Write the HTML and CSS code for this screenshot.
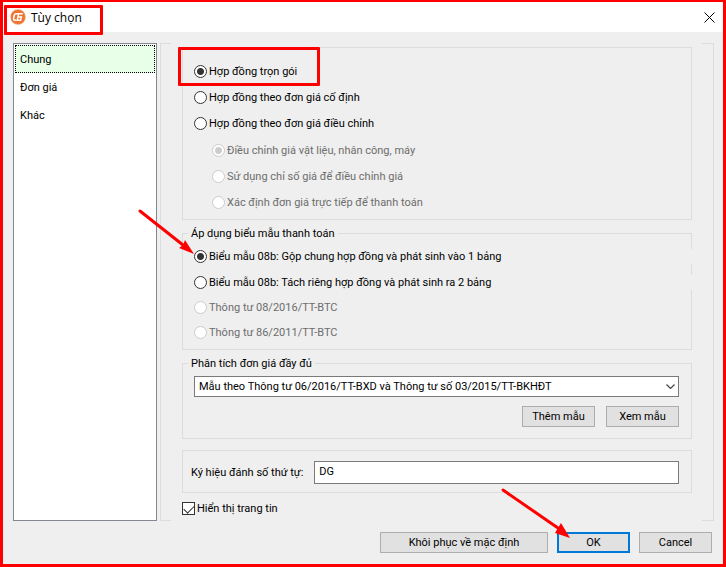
FILE: index.html
```html
<!DOCTYPE html>
<html lang="vi">
<head>
    <meta charset="UTF-8">
    <meta name="viewport" content="width=device-width, initial-scale=1.0">
    <title>Tùy chọn</title>
    <link rel="stylesheet" href="styles.css">
</head>
<body>

<div class="dialog">
    <header class="titlebar">
        <div class="title">
            <svg class="logo" width="16" height="16" viewBox="0 0 16 16">
                <circle cx="8" cy="8" r="7.7" fill="#f0a070"/>
                <circle cx="8" cy="8" r="7" fill="#ee7430"/>
                <path d="M12.8 4.8H6.2Q4.6 4.8 4.2 6.4L3.6 9.4Q3.4 11.2 5 11.2H6.4" fill="none" stroke="#fff" stroke-width="1.6"/>
                <path d="M8.6 5L7.2 11.2H10.6L11.4 8H8.2" fill="none" stroke="#fff" stroke-width="1.4"/>
            </svg>
            <h1>Tùy chọn</h1>
            <span class="mark mark-title"></span>
        </div>
        <button class="close" aria-label="Close">
            <svg width="11" height="11" viewBox="0 0 11 11">
                <path d="M0.5 0.5L10.5 10.5M10.5 0.5L0.5 10.5" stroke="#000" stroke-width="1"/>
            </svg>
        </button>
    </header>

    <main class="content">
        <nav class="sidebar">
            <a href="#" class="active">Chung</a>
            <a href="#">Đơn giá</a>
            <a href="#">Khác</a>
        </nav>

        <div class="panel">
            <!-- Contract type -->
            <fieldset class="group contract">
                <div class="row">
                    <input type="radio" name="contract" id="c1" checked>
                    <label for="c1">Hợp đồng trọn gói</label>
                    <span class="mark mark-row"></span>
                </div>
                <div class="row">
                    <input type="radio" name="contract" id="c2">
                    <label for="c2">Hợp đồng theo đơn giá cố định</label>
                </div>
                <div class="row">
                    <input type="radio" name="contract" id="c3">
                    <label for="c3">Hợp đồng theo đơn giá điều chỉnh</label>
                </div>
                <div class="sub">
                    <div class="row">
                        <input type="radio" name="adjust" id="a1" checked disabled>
                        <label for="a1">Điều chỉnh giá vật liệu, nhân công, máy</label>
                    </div>
                    <div class="row">
                        <input type="radio" name="adjust" id="a2" disabled>
                        <label for="a2">Sử dụng chỉ số giá để điều chỉnh giá</label>
                    </div>
                    <div class="row">
                        <input type="radio" name="adjust" id="a3" disabled>
                        <label for="a3">Xác định đơn giá trực tiếp để thanh toán</label>
                    </div>
                </div>
            </fieldset>

            <!-- Payment form -->
            <fieldset class="group forms">
                <legend>Áp dụng biểu mẫu thanh toán</legend>
                <div class="row wide">
                    <input type="radio" name="form" id="f1" checked>
                    <label for="f1">Biểu mẫu 08b: Gộp chung hợp đồng và phát sinh vào 1 bảng</label>
                    <svg class="arrow arrow-form" width="58" height="48" viewBox="0 0 58 48">
                        <path d="M3 2L46 36" stroke="#f00" stroke-width="3" stroke-linecap="round"/>
                        <path d="M57 45L42 39L46 36L48 31Z" fill="#f00"/>
                    </svg>
                </div>
                <div class="row wide">
                    <input type="radio" name="form" id="f2">
                    <label for="f2">Biểu mẫu 08b: Tách riêng hợp đồng và phát sinh ra 2 bảng</label>
                </div>
                <div class="row short">
                    <input type="radio" name="form" id="f3" disabled>
                    <label for="f3">Thông tư 08/2016/TT-BTC</label>
                </div>
                <div class="row short">
                    <input type="radio" name="form" id="f4" disabled>
                    <label for="f4">Thông tư 86/2011/TT-BTC</label>
                </div>
            </fieldset>

            <!-- Unit price template -->
            <fieldset class="group template">
                <legend>Phân tích đơn giá đầy đủ</legend>
                <div class="select-box">
                    <select aria-label="Phân tích đơn giá đầy đủ">
                        <option>Mẫu theo Thông tư 06/2016/TT-BXD và Thông tư số 03/2015/TT-BKHĐT</option>
                    </select>
                    <svg class="chevron" width="9" height="6" viewBox="0 0 9 6">
                        <path d="M0.5 0.5L4.5 4.5L8.5 0.5" fill="none" stroke="#444" stroke-width="1.2"/>
                    </svg>
                </div>
                <div class="template-buttons">
                    <button class="btn">Thêm mẫu</button>
                    <button class="btn">Xem mẫu</button>
                </div>
            </fieldset>

            <div class="group numbering">
                <label for="prefix">Ký hiệu đánh số thứ tự:</label>
                <input type="text" id="prefix" value="DG">
            </div>

            <div class="news">
                <input type="checkbox" id="news" checked>
                <label for="news">Hiển thị trang tin</label>
            </div>
        </div>
    </main>

    <footer class="footer">
        <button class="btn btn-wide">Khôi phục về mặc định</button>
        <div class="ok">
            <button class="btn btn-default">OK</button>
            <svg class="arrow arrow-ok" width="72" height="52" viewBox="0 0 72 52">
                <path d="M3 2L58 40" stroke="#f00" stroke-width="3" stroke-linecap="round"/>
                <path d="M70 50L55 45L58 40L61 35Z" fill="#f00"/>
            </svg>
        </div>
        <button class="btn">Cancel</button>
    </footer>
</div>

</body>
</html>
```

FILE: styles.css
```css
* {
    box-sizing: border-box;
}

body {
    margin: 0;
    font-family: Roboto, Tahoma, sans-serif;
    font-size: 11px;
    line-height: 15px;
    color: #000;
}

button,
input,
select {
    margin: 0;
    font: inherit;
    color: inherit;
}

.dialog {
    display: flex;
    flex-direction: column;
    min-height: 100vh;
    background: #efefef;
    border: 3px solid #f00;
    border-top-width: 2px;
}

/* Title bar */
.titlebar {
    display: flex;
    justify-content: space-between;
    align-items: center;
    height: 30px;
    padding: 0 8px 0 7px;
    background: #fff;
}

.title {
    position: relative;
    display: flex;
    align-items: center;
    gap: 5px;
}

.title h1 {
    margin: 0;
    font-family: "Open Sans", "Segoe UI", sans-serif;
    font-size: 12px;
    font-weight: normal;
}

.close {
    display: flex;
    padding: 0;
    border: none;
    background: none;
}

/* Red highlights */
.mark {
    position: absolute;
    border: 3px solid #f00;
    border-radius: 1px;
    pointer-events: none;
}

.mark-title {
    left: -6px;
    top: -4px;
    width: 99px;
    height: 30px;
}

.mark-row {
    left: -16px;
    top: -11px;
    width: 142px;
    height: 39px;
}

.arrow {
    position: absolute;
    pointer-events: none;
}

.arrow-form {
    left: -57px;
    bottom: 12px;
}

.arrow-ok {
    left: -57px;
    top: -44px;
}

/* Content */
.content {
    flex: 1;
    display: grid;
    grid-template-columns: 144px 1fr;
    gap: 3px;
    padding: 11px 9px 0 10px;
}

.sidebar {
    padding: 1px;
    background: #fff;
    border: 1px solid #828790;
}

.sidebar a {
    display: flex;
    align-items: center;
    height: 28px;
    padding: 0 4px;
    border: 1px solid transparent;
    color: #000;
    text-decoration: none;
}

.sidebar .active {
    background: #e8ffe8;
    border: 1px dotted #000;
}

/* only the corners of the top and bottom edges are drawn */
.panel {
    padding: 4px 21px 5px;
    border: solid #dcdcdc;
    border-width: 0 1px;
    background:
        linear-gradient(#dcdcdc, #dcdcdc) left top / 10px 1px no-repeat,
        linear-gradient(#dcdcdc, #dcdcdc) right top / 11px 1px no-repeat,
        linear-gradient(#dcdcdc, #dcdcdc) left bottom / 10px 1px no-repeat,
        linear-gradient(#dcdcdc, #dcdcdc) right bottom / 11px 1px no-repeat;
}

.group {
    min-width: 0;
    margin: 0 0 6px;
    border: 1px solid #dcdcdc;
}

.group legend {
    height: 15px;
    margin-left: -6px;
    padding: 0 3px;
}

.contract {
    padding: 10px 0 4px 11px;
}

.forms {
    padding: 2px 0 4px 11px;
}

.row {
    position: relative;
    display: flex;
    align-items: center;
    gap: 2px;
    height: 26px;
}

.short {
    height: 25px;
}

.sub {
    padding: 1px 0 0 18px;
}

/* these labels run over the right edge of the group */
.wide label {
    flex: 1;
    margin-right: -1px;
    background: #efefef;
}

/* Radio and tick box */
input[type="radio"],
input[type="checkbox"] {
    appearance: none;
    flex: none;
    width: 13px;
    height: 13px;
    background: #fff;
    border: 1px solid #333;
}

input[type="radio"] {
    border-radius: 50%;
}

input[type="radio"]:checked {
    background: radial-gradient(circle, #333 3px, #fff 4px);
}

input[type="radio"]:disabled {
    border-color: #ccc;
}

input[type="radio"]:disabled:checked {
    background: radial-gradient(circle, #ccc 3px, #fff 4px);
}

input:disabled + label {
    color: #6d6d6d;
}

input[type="checkbox"]:checked::before {
    content: "";
    display: block;
    width: 9px;
    height: 5px;
    margin: 2px 0 0 1px;
    border: solid #333;
    border-width: 0 0 1px 1px;
    transform: rotate(-45deg);
}

/* Template */
.template {
    margin-bottom: 11px;
    padding: 5px 12px 11px 11px;
}

.select-box {
    position: relative;
}

select {
    appearance: none;
    display: block;
    width: 100%;
    height: 21px;
    padding: 0 20px 0 4px;
    background: #fff;
    border: 1px solid #7a7a7a;
    border-radius: 0;
}

.chevron {
    position: absolute;
    right: 4px;
    top: 8px;
    pointer-events: none;
}

.template-buttons {
    display: flex;
    justify-content: flex-end;
    gap: 11px;
    margin-top: 9px;
}

.btn {
    width: 73px;
    height: 21px;
    padding: 0;
    background: #e1e1e1;
    border: 1px solid #adadad;
}

.btn-wide {
    width: 168px;
}

.btn-default {
    display: block;
    border: 2px solid #0078d7;
}

/* Numbering */
.numbering {
    display: flex;
    align-items: center;
    gap: 11px;
    margin-bottom: 9px;
    padding: 10px 12px 8px 8px;
}

.numbering input {
    flex: 1;
    min-width: 0;
    height: 23px;
    padding: 0 4px 3px;
    background: #fff;
    border: 1px solid #7a7a7a;
}

.news {
    display: flex;
    align-items: center;
    gap: 2px;
    height: 13px;
}

/* Footer */
.footer {
    display: flex;
    justify-content: flex-end;
    gap: 9px;
    padding: 11px 11px;
}

.ok {
    position: relative;
}
```
